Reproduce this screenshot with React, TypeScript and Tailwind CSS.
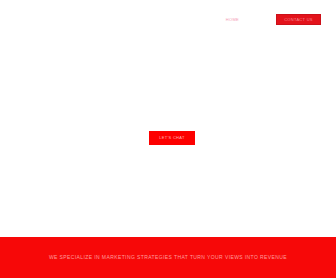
export default function App() {
  return (
    <div className="w-[336px] h-[280px] bg-white flex flex-col font-['Liberation_Sans',Arial,sans-serif] overflow-hidden">
      <header className="h-[40px] flex items-start pt-[14px] pr-[15px] justify-end gap-[37px]">
        <a className="mt-[3px] text-[4px] leading-[5px] tracking-[0.3px] text-[#f49ab4]">HOME</a>
        <button className="w-[45px] h-[11px] bg-[#e3131b] border border-[#cc1019] text-[4px] leading-none tracking-[0.3px] text-[#f58a95] flex items-center justify-center">
          CONTACT US
        </button>
      </header>
      <main className="flex-1 flex items-start justify-center pt-[91px] pl-[8px]">
        <button className="w-[46px] h-[14px] bg-[#fd0000] text-[4px] leading-none tracking-[0.3px] text-[#ffb4b4] flex items-center justify-center">
          LET'S CHAT
        </button>
      </main>
      <section className="h-[41px] mb-[2px] bg-[#f70808] flex items-center justify-center">
        <p className="text-[5px] leading-none tracking-[0.4px] text-[#ff9c9c]">
          WE SPECIALIZE IN MARKETING STRATEGIES THAT TURN YOUR VIEWS INTO REVENUE
        </p>
      </section>
    </div>
  );
}
